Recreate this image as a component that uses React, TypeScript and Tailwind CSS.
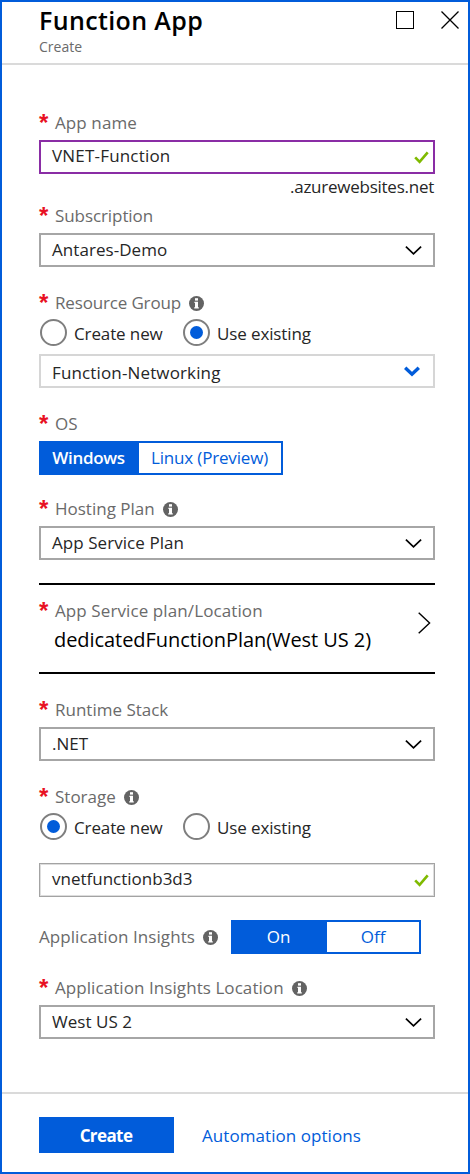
import type { ReactNode } from "react";

function InfoIcon() {
  return (
    <svg viewBox="0 0 15 15" className="h-[15px] w-[15px] shrink-0">
      <circle cx="7.5" cy="7.5" r="7.5" fill="#636363" />
      <rect x="6" y="2.2" width="3" height="2.4" fill="#fff" />
      <path d="M5.4 5.8H9v5.4h.8v1.2H5.2v-1.2H6V6.9h-.6z" fill="#fff" />
    </svg>
  );
}

function CheckIcon() {
  return (
    <svg viewBox="0 0 15 13" className="h-[13px] w-[15px] shrink-0">
      <path d="M1.2 6.3 5.6 10.9 13.7 1.3" fill="none" stroke="#7fba00" strokeWidth="2.6" />
    </svg>
  );
}

function ChevronDown({ primary = false }: { primary?: boolean }) {
  return (
    <svg viewBox="0 0 17 11" className="h-[11px] w-[17px] shrink-0">
      {primary ? (
        <path d="M1.2 1.7 8 8.2 14.8 1.7" fill="none" stroke="#015cda" strokeWidth="3.4" />
      ) : (
        <path d="M.9 1.6 8.5 8.8 16.1 1.6" fill="none" stroke="#000" strokeWidth="1.7" />
      )}
    </svg>
  );
}

function Label({ children, info = false, className = "" }: { children: ReactNode; info?: boolean; className?: string }) {
  return (
    <div className={`flex h-6 items-center text-[#6a6a6a] ${className}`}>
      <span className="w-4 shrink-0 font-['Liberation_Sans',sans-serif] text-[24px] leading-6 font-bold tracking-normal text-[#e81123]">
        *
      </span>
      <span className="whitespace-nowrap">{children}</span>
      {info && (
        <span className="ml-2">
          <InfoIcon />
        </span>
      )}
    </div>
  );
}

function Select({ children, className = "" }: { children: ReactNode; className?: string }) {
  return (
    <div className={`flex h-[34px] items-center justify-between border-2 border-[#a6a6a6] pr-[11px] pl-[11px] ${className}`}>
      <span className="-mt-px">{children}</span>
      <ChevronDown />
    </div>
  );
}

function Radio({ children, checked = false, className = "" }: { children: ReactNode; checked?: boolean; className?: string }) {
  return (
    <div className={`flex h-[27px] items-center gap-[7px] tracking-[-0.12px] ${className}`}>
      <span className="flex size-[27px] items-center justify-center rounded-full border-2 border-[#7f7f7f]">
        {checked && <span className="size-[13px] rounded-full bg-[#015cda]" />}
      </span>
      <span className="mt-[2px] whitespace-nowrap">{children}</span>
    </div>
  );
}

export default function App() {
  return (
    <div className="flex h-[1174px] w-[470px] flex-col border-2 border-[#015cda] bg-white font-['Open_Sans',sans-serif] text-[17px] leading-6 text-[#262626]">
      <header className="flex h-[63px] shrink-0 justify-between border-b-2 border-[#dadada] pt-[2px] pr-[9px] pl-[37px]">
        <div>
          <h1 className="text-[25px] leading-8 font-semibold tracking-[0.37px] text-black">Function App</h1>
          <p className="mt-px text-[14px] leading-5 text-[#6a6a6a]">Create</p>
        </div>
        <div className="flex gap-[27px] pt-[7px]">
          <svg viewBox="0 0 18 18" className="size-[18px]">
            <rect x=".5" y=".5" width="17" height="17" fill="none" stroke="#000" />
          </svg>
          <svg viewBox="0 0 18 18" className="size-[18px]">
            <path d="M.5.5l17 17M17.5.5l-17 17" stroke="#000" strokeWidth="1.3" />
          </svg>
        </div>
      </header>

      <main className="ml-[37px] w-[396px] flex-1 pt-[46px]">
        <Label className="tracking-[0.1px]">App name</Label>
        <div className="mt-[5px] flex h-[34px] items-center justify-between border-2 border-[#8a2da5] pr-1 pl-[11px]">
          <span className="-mt-[3px] tracking-[0.19px]">VNET-Function</span>
          <CheckIcon />
        </div>
        <p className="pt-px pr-px text-right tracking-[-0.25px]">.azurewebsites.net</p>

        <Label className="mt-[5px] tracking-[-0.08px]">Subscription</Label>
        <Select className="mt-[5px] tracking-[0.05px]">Antares-Demo</Select>

        <Label info className="mt-6 tracking-[-0.16px]">Resource Group</Label>
        <div className="mt-1 flex pl-px">
          <Radio className="w-[143px]">Create new</Radio>
          <Radio checked>Use existing</Radio>
        </div>
        <div className="mt-2 flex h-[34px] items-center justify-between border-2 border-[#d6d6d6] pr-3 pl-[11px]">
          <span className="mt-[3px] tracking-[0.14px]">Function-Networking</span>
          <ChevronDown primary />
        </div>

        <Label className="mt-6">OS</Label>
        <div className="mt-[5px] flex h-[34px] w-[244px] border-2 border-[#015cda] text-center leading-[30px]">
          <span className="w-[98px] bg-[#015cda] pr-[3px] font-semibold tracking-[-0.3px] text-white">Windows</span>
          <span className="flex-1 pr-px tracking-[-0.17px] text-[#015cda]">Linux (Preview)</span>
        </div>

        <Label info className="mt-[22px]">Hosting Plan</Label>
        <Select className="mt-[5px] tracking-[0.06px]">App Service Plan</Select>

        <section className="mt-[23px] flex h-[91px] justify-between border-y-2 border-black pr-1">
          <div className="pt-[14px]">
            <Label className="tracking-[0.1px]">App Service plan/Location</Label>
            <p className="mt-[3px] pl-[15px] text-[20px] leading-7 tracking-[-0.06px] text-black">
              dedicatedFunctionPlan(West US 2)
            </p>
          </div>
          <svg viewBox="0 0 13 22" className="mt-[27px] h-[22px] w-[13px]">
            <path d="M.7.7 11.6 11 .7 21.3" fill="none" stroke="#000" strokeWidth="1.4" />
          </svg>
        </section>

        <Label className="mt-6">Runtime Stack</Label>
        <Select className="mt-[5px]">.NET</Select>

        <Label info className="mt-6">Storage</Label>
        <div className="mt-1 flex pl-px">
          <Radio checked className="w-[143px]">Create new</Radio>
          <Radio>Use existing</Radio>
        </div>
        <div className="mt-[23px] flex h-[34px] items-center justify-between border border-[#a3a3a3] pr-[5px] pl-3 inset-ring inset-ring-[#dddddd]">
          <span className="-mt-[3px]">vnetfunctionb3d3</span>
          <CheckIcon />
        </div>

        <div className="mt-[23px] flex h-[34px] items-center text-[#6a6a6a]">
          <span className="w-[164px] whitespace-nowrap tracking-[0.07px]">Application Insights</span>
          <InfoIcon />
          <div className="ml-[13px] flex h-[34px] w-[190px] border-2 border-[#015cda] text-center leading-[30px]">
            <span className="w-[94px] bg-[#015cda] pr-[3px] font-medium text-white">On</span>
            <span className="flex-1 text-[#015cda]">Off</span>
          </div>
        </div>

        <Label info className="mt-[22px] tracking-[0.07px]">Application Insights Location</Label>
        <Select className="mt-[5px] tracking-[0.05px]">West US 2</Select>
      </main>

      <footer className="flex h-[80px] shrink-0 gap-7 border-t-2 border-[#dadada] pt-[23px] pl-[37px]">
        <button className="h-9 w-[135px] bg-[#015cda] pt-[2px] pr-px font-bold tracking-[-0.6px] text-white">Create</button>
        <a className="pt-px leading-9 tracking-[0.06px] text-[#015cda]">Automation options</a>
      </footer>
    </div>
  );
}
